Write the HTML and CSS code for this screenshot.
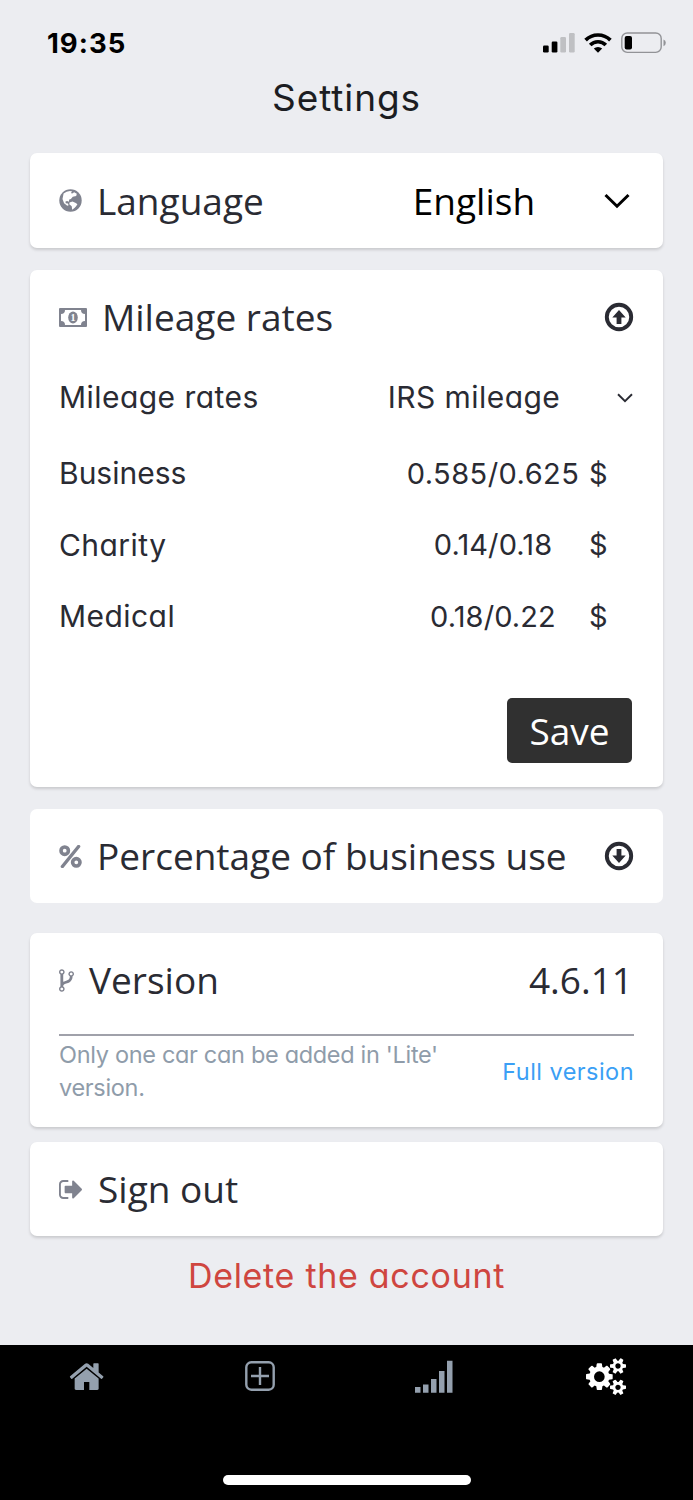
FILE: index.html
```html
<!DOCTYPE html>
<html lang="en">
<head>
	<meta charset="utf-8">
	<title>Settings</title>
	<link rel="stylesheet" href="styles.css">
</head>
<body>
	<div class="status">
		<span class="time">19:35</span>
		<div class="status-icons">
			<svg width="32" height="20" viewBox="0 0 32 20">
				<rect x="0" y="12.5" width="5.7" height="7" rx="1.2"/>
				<rect x="8.7" y="8.6" width="5.7" height="10.9" rx="1.2"/>
				<rect x="17.3" y="4" width="5.7" height="15.5" rx="1.2" fill="#bfc0c3"/>
				<rect x="26" y="0" width="5.7" height="19.5" rx="1.2" fill="#bfc0c3"/>
			</svg>
			<svg class="wifi" width="28" height="20" viewBox="0 0 28 20" fill="none" stroke="#000" stroke-width="3.7">
				<path d="M1.6 7.1a17.6 17.6 0 0 1 24.8 0"/>
				<path d="M6.2 12a11 11 0 0 1 15.6 0"/>
				<path d="M9.8 15.6a6 6 0 0 1 8.4 0L14 19.8z" fill="#000" stroke="none"/>
			</svg>
			<svg class="battery" width="45" height="22" viewBox="0 0 45 22">
				<rect x=".8" y="1" width="39.4" height="19.4" rx="5.5" fill="none" stroke="#929397" stroke-width="1.4"/>
				<rect x="3.7" y="4" width="7.3" height="13.4" rx="2"/>
				<path d="M42.5 7.4q2.3 1 2.3 3.4t-2.3 3.4z" fill="#929397"/>
			</svg>
		</div>
	</div>

	<h1>Settings</h1>

	<div class="card language">
		<div class="head">
			<svg class="ico" width="23" height="23" viewBox="0 0 23 23">
				<circle cx="11.5" cy="11.5" r="11.2" fill="#80838f"/>
				<path fill="#fff" d="M4.600 4.600Q7.500 2.200 11 2l2.200.6-1.400 1.300 1.400.6 2-1.300 2.600 1.600-.6 2.200-3.400.8-1.900 2.100-1.700.6-.3 2.300-1.800-.8-1.600.6.2 1.700 2.200.3.700 1.700-1.300.5-3.200-2.600-1.600-4.200z"/>
				<path fill="#fff" d="M10.500 13.400l3-.8 3.300 1.400 1.600 1.300-1.300 2-1.400 1.500-2.500 2-.5-3.500-2.400-2z"/>
			</svg>
			<span>Language</span>
		</div>
		<div class="picked">
			<span>English</span>
			<svg width="26" height="16" viewBox="0 0 26 16" fill="none" stroke="#000" stroke-width="3"><path d="M1.500 2L13 13.200 24.500 2"/></svg>
		</div>
	</div>

	<div class="card rates">
		<div class="head">
			<svg class="ico" width="28" height="19" viewBox="0 0 28 19">
				<rect width="28" height="19" rx="1" fill="#80838f"/>
				<path fill="#fff" d="M6 2h16q0 4 4 4v7q-4 0-4 4H6q0-4-4-4V6q4 0 4-4z"/>
				<ellipse cx="14" cy="9.500" rx="4.800" ry="6" fill="#80838f"/>
				<text x="14" y="13.200" text-anchor="middle" class="bill">1</text>
			</svg>
			<span>Mileage rates</span>
			<svg class="toggle" width="30" height="30" viewBox="0 0 30 30">
				<circle cx="15" cy="15" r="12.200" fill="none" stroke="#2a2b33" stroke-width="3.900"/>
				<path fill="#2a2b33" d="M15 8l6.700 7.400h-4.300V22h-4.800v-6.600H8.300z"/>
			</svg>
		</div>
		<div class="row plan">
			<span>Mileage rates</span>
			<span class="value">IRS mileage</span>
			<svg width="16" height="10" viewBox="0 0 16 10" fill="none" stroke="#2a2b33" stroke-width="1.900"><path d="M1 1.200l7 6.900 7-6.900"/></svg>
		</div>
		<div class="row"><span class="business">Business</span><span class="value num">0.585/0.625</span><span class="cur">$</span></div>
		<div class="row"><span>Charity</span><span class="value num short">0.14/0.18</span><span class="cur">$</span></div>
		<div class="row"><span>Medical</span><span class="value num short">0.18/0.22</span><span class="cur">$</span></div>
		<button class="save">Save</button>
	</div>

	<div class="card percent">
		<div class="head">
			<svg class="ico" width="23" height="23" viewBox="0 0 23 23" fill="none" stroke="#80838f">
				<circle cx="5.700" cy="5.700" r="3.700" stroke-width="3.600"/>
				<circle cx="17.300" cy="17.300" r="3.700" stroke-width="3.600"/>
				<path d="M19.600 1.500L3.400 21.500" stroke-width="3.400" stroke-linecap="round"/>
			</svg>
			<span>Percentage of business use</span>
			<svg class="toggle" width="30" height="30" viewBox="0 0 30 30">
				<circle cx="15" cy="15" r="12.200" fill="none" stroke="#2a2b33" stroke-width="3.900"/>
				<path fill="#2a2b33" d="M15 22l6.700-7.400h-4.300V8h-4.800v6.600H8.300z"/>
			</svg>
		</div>
	</div>

	<div class="card version">
		<div class="head">
			<svg class="ico" width="15" height="23" viewBox="384 128 1024 1536" fill="#80838f"><path d="M672 1472q0-40-28-68t-68-28-68 28-28 68 28 68 68 28 68-28 28-68zm0-1152q0-40-28-68t-68-28-68 28-28 68 28 68 68 28 68-28 28-68zm640 128q0-40-28-68t-68-28-68 28-28 68 28 68 68 28 68-28 28-68zm96 0q0 52-26 96.500t-70 69.500q-2 287-226 414-67 38-203 81-128 40-169.500 71t-41.500 100v26q44 25 70 69.500t26 96.500q0 80-56 136t-136 56-136-56-56-136q0-52 26-96.500t70-69.500v-820q-44-25-70-69.500t-26-96.500q0-80 56-136t136-56 136 56 56 136q0 52-26 96.500t-70 69.500v497q54-26 154-57 55-17 87.500-29.500t70.500-31 59-39.500 40.500-51 28-69.500 8.500-91.500q-44-25-70-69.500t-26-96.500q0-80 56-136t136-56 136 56 56 136z"/></svg>
			<span>Version</span>
			<span class="number">4.6.11</span>
		</div>
		<div class="lite">
			<p>Only one car can be added in 'Lite'<br>version.</p>
			<a>Full version</a>
		</div>
	</div>

	<div class="card signout">
		<div class="head">
			<svg class="ico" width="23" height="19" viewBox="64 256 1568 1280" fill="#80838f"><path d="M704 1440q0 4 1 20t.5 26.500-3 23.500-10 19.500-20.500 6.500h-320q-119 0-203.500-84.500t-84.500-203.500v-704q0-119 84.500-203.500t203.500-84.500h320q13 0 22.500 9.500t9.500 22.500q0 4 1 20t.5 26.500-3 23.500-10 19.500-20.500 6.500h-320q-66 0-113 47t-47 113v704q0 66 47 113t113 47h312l11.500 1 11.500 3 8 5.500 7 9 2 13.500zm928-544q0 26-19 45l-544 544q-19 19-45 19t-45-19-19-45v-288h-448q-26 0-45-19t-19-45v-384q0-26 19-45t45-19h448v-288q0-26 19-45t45-19 45 19l544 544q19 19 19 45z"/></svg>
			<span>Sign out</span>
		</div>
	</div>

	<a class="delete">Delete the account</a>

	<div class="tabs">
		<div class="tab"><svg width="37.300" height="37.300" viewBox="0 0 1792 1792"><path d="M1472 992v480q0 26-19 45t-45 19h-384v-384h-256v384h-384q-26 0-45-19t-19-45v-480q0-1 .5-3t.5-3l575-474 575 474q1 2 1 6zm223-69l-62 74q-8 9-21 11h-3q-13 0-21-7l-692-577-692 577q-12 8-24 7-13-2-21-11l-62-74q-8-10-7-23.500t11-21.500l719-599q32-26 76-26t76 26l244 204v-195q0-14 9-23t23-9h192q14 0 23 9t9 23v408l219 182q10 8 11 21.500t-7 23.500z"/></svg></div>
		<div class="tab add"><svg width="30" height="30" viewBox="0 0 30 30" fill="none" stroke="#94a0ae" stroke-width="2.400"><rect x="1.300" y="1.300" width="27.400" height="27.400" rx="5"/><path d="M15 6v18M6 15h18"/></svg></div>
		<div class="tab stats"><svg width="38" height="33" viewBox="0 0 38 33"><path d="M0 27h5.500v5.700H0zM8 24.500h5.500v8.200H8zM16 19h5.500v13.700H16zM24 11h5.500v21.700H24zM32 .7h5.500v32H32z"/></svg></div>
		<div class="tab active"><svg width="40" height="37.300" viewBox="0 0 1920 1792"><path d="M896 896q0-106-75-181t-181-75-181 75-75 181 75 181 181 75 181-75 75-181zm768 512q0-52-38-90t-90-38-90 38-38 90q0 53 37.500 90.500t90.500 37.500 90.500-37.500 37.500-90.500zm0-1024q0-52-38-90t-90-38-90 38-38 90q0 53 37.500 90.500t90.500 37.500 90.500-37.500 37.500-90.500zm-384 421v185q0 10-7 19.500t-16 10.500l-155 24q-11 35-32 76 34 48 90 115 7 11 7 20 0 12-7 19-23 30-82.500 89.500t-78.500 59.500q-11 0-21-7l-115-90q-37 19-77 31-11 108-23 155-7 24-30 24h-186q-11 0-20-7.500t-10-17.500l-23-153q-34-10-75-31l-118 89q-7 7-20 7-11 0-21-8-144-133-144-160 0-9 7-19 10-14 41-53t47-61q-23-44-35-82l-152-24q-10-1-17-9.500t-7-19.500v-185q0-10 7-19.500t16-10.500l155-24q11-35 32-76-34-48-90-115-7-11-7-20 0-12 7-20 22-30 82-89t79-59q11 0 21 7l115 90q34-18 77-32 11-108 23-154 7-24 30-24h186q11 0 20 7.500t10 17.500l23 153q34 10 75 31l118-89q8-7 20-7 11 0 21 8 144 133 144 160 0 8-7 19-12 16-42 54t-45 60q23 48 34 82l152 23q10 2 17 10.500t7 19.500zm640 533v140q0 16-149 31-12 27-30 52 51 113 51 138 0 4-4 7-122 71-124 71-8 0-46-47t-52-68q-20 2-30 2t-30-2q-14 21-52 68t-46 47q-2 0-124-71-4-3-4-7 0-25 51-138-18-25-30-52-149-15-149-31v-140q0-16 149-31 13-29 30-52-51-113-51-138 0-4 4-7 4-2 35-20t59-34 30-16q8 0 46 46.500t52 67.500q20-2 30-2t30 2q51-71 92-112l6-2q4 0 124 70 4 3 4 7 0 25-51 138 17 23 30 52 149 15 149 31zm0-1024v140q0 16-149 31-12 27-30 52 51 113 51 138 0 4-4 7-122 71-124 71-8 0-46-47t-52-68q-20 2-30 2t-30-2q-14 21-52 68t-46 47q-2 0-124-71-4-3-4-7 0-25 51-138-18-25-30-52-149-15-149-31v-140q0-16 149-31 13-29 30-52-51-113-51-138 0-4 4-7 4-2 35-20t59-34 30-16q8 0 46 46.500t52 67.500q20-2 30-2t30 2q51-71 92-112l6-2q4 0 124 70 4 3 4 7 0 25-51 138 17 23 30 52 149 15 149 31z"/></svg></div>
		<div class="bar"></div>
	</div>
</body>
</html>
```
FILE: styles.css
```css
* {
	box-sizing: border-box;
}
body {
	margin: 0;
	width: 693px;
	height: 1500px;
	display: flex;
	flex-direction: column;
	overflow: hidden;
	background: #ecedf1;
	color: #2a2b33;
	font-family: Inter, "Open Sans", sans-serif;
	font-feature-settings: "cv11";
	font-size: 30px;
	letter-spacing: 0.45px;
}
svg {
	display: block;
	flex: none;
}
.status {
	height: 74px;
	padding: 12px 27px 0 47px;
	display: flex;
	align-items: center;
	justify-content: space-between;
	color: #000;
}
.time {
	font-size: 27.5px;
	font-weight: 700;
	letter-spacing: 1px;
}
.status-icons {
	display: flex;
	align-items: center;
}
.wifi {
	margin-left: 9px;
}
.battery {
	margin-left: 9px;
}
h1 {
	margin: 0;
	height: 79px;
	line-height: 48px;
	font-size: 37px;
	font-weight: 400;
	letter-spacing: 0.9px;
	text-align: center;
	color: #1c1d22;
}
.card {
	margin: 0 30px;
	padding: 0 29px;
	background: #fff;
	border-radius: 7px;
	box-shadow: 0 2px 3px rgba(0, 0, 0, 0.15);
}
.head {
	display: flex;
	align-items: center;
	height: 94px;
	font-family: "Open Sans", sans-serif;
	font-size: 37px;
	letter-spacing: 0;
	line-height: 50px;
}
.head > span {
	margin-top: -1px;
}
.ico {
	margin-right: 15px;
}
.language {
	display: flex;
	height: 95px;
	margin-bottom: 22px;
}
.language .head > span {
	margin-top: 1px;
}
.picked {
	flex: 1;
	display: flex;
	align-items: center;
	justify-content: space-between;
	height: 94px;
	padding: 2px 4px 0 149px;
	color: #000;
	font-family: "Open Sans", sans-serif;
	font-size: 37px;
	letter-spacing: 0;
}
.picked span {
	margin-top: -1px;
}
.rates {
	height: 517px;
	margin-bottom: 22px;
}
.rates .head {
	height: 90px;
	padding-top: 4px;
}
.bill {
	font: bold 10px "Liberation Serif", serif;
	fill: #fff;
}
.toggle {
	margin-left: auto;
}
.row {
	display: grid;
	grid-template-columns: 347px 174px 53px;
	align-items: center;
	height: 71.5px;
	padding-top: 1px;
}
.business {
	letter-spacing: 0;
}
.row .value {
	text-align: center;
}
.row .num {
	font-size: 29px;
}
.row .short {
	letter-spacing: 0.1px;
}
.cur {
	padding-left: 9px;
	font-size: 29px;
}
.plan {
	grid-template-columns: 320px 190px 64px;
	height: 73px;
	margin-bottom: 4px;
}
.plan svg {
	margin: 1px 0 0 48px;
}
.save {
	display: block;
	margin: 46px 2px 0 auto;
	width: 125px;
	height: 65px;
	padding: 0;
	border: 0;
	border-radius: 5px;
	background: #303030;
	color: #fff;
	font-family: "Open Sans", sans-serif;
	font-size: 37px;
}
.percent {
	height: 94px;
	margin-bottom: 30px;
	box-shadow: none;
}
.version {
	height: 194px;
	margin-bottom: 15px;
}
.version .head {
	height: 103px;
	padding-bottom: 7px;
	border-bottom: 2px solid #a0a1aa;
}
.head > .number {
	margin-left: auto;
	margin-right: 1px;
}
.lite {
	display: flex;
	justify-content: space-between;
	font-size: 23.5px;
	line-height: 33px;
	color: #8f9caa;
	padding-top: 2px;
}
.lite p {
	margin: 0;
	letter-spacing: -0.32px;
}
.lite a {
	margin-top: 17px;
	color: #3b9ff5;
}
.signout {
	height: 94px;
}
.signout .ico {
	margin-right: 16px;
}
.delete {
	margin-top: 16px;
	font-size: 34px;
	letter-spacing: 0.7px;
	line-height: 48px;
	text-align: center;
	color: #cf4640;
}
.tabs {
	margin-top: auto;
	height: 155px;
	display: grid;
	grid-template-columns: repeat(4, 173.25px);
	grid-template-rows: 63px 1fr;
	background: #000;
	fill: #94a0ae;
}
.tab {
	display: flex;
	align-items: center;
	justify-content: center;
}
.add {
	padding-bottom: 2px;
}
.stats {
	padding-left: 2px;
}
.active {
	fill: #fff;
}
.bar {
	grid-column: 1 / 5;
	justify-self: center;
	align-self: end;
	width: 248px;
	height: 10px;
	margin-bottom: 15px;
	border-radius: 5px;
	background: #fff;
}
```
